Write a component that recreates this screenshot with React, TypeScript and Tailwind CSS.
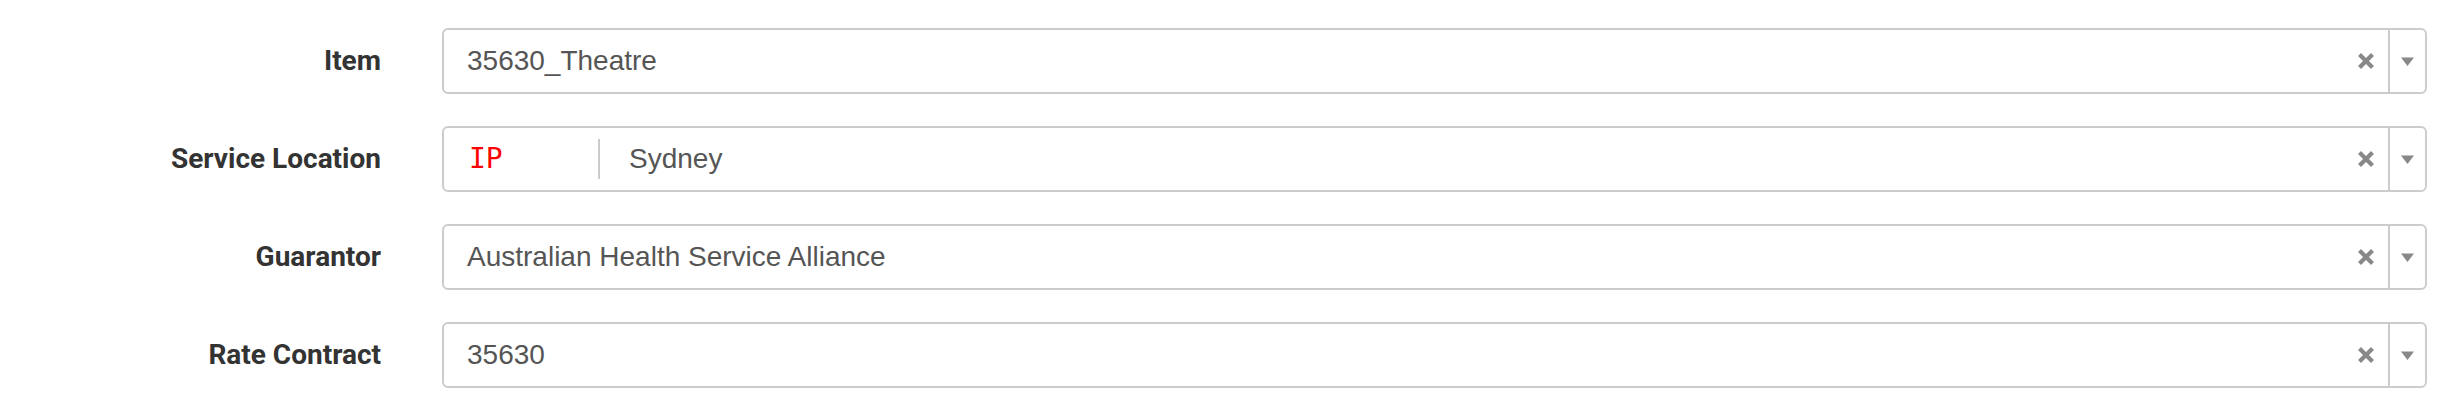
import React from "react";

type Row = {
  label: string;
  value: string;
  tag?: string;
};

const rows: Row[] = [
  { label: "Item", value: "35630_Theatre" },
  { label: "Service Location", value: "Sydney", tag: "IP" },
  { label: "Guarantor", value: "Australian Health Service Alliance" },
  { label: "Rate Contract", value: "35630" },
];

function ClearIcon() {
  return (
    <svg width="16" height="16" viewBox="0 0 16 16" className="block">
      <path d="M3 3 L13 13 M13 3 L3 13" stroke="#888888" strokeWidth="4.2" strokeLinecap="square" />
    </svg>
  );
}

function ArrowIcon() {
  return (
    <svg width="13" height="9" viewBox="0 0 13 9" className="block">
      <path d="M0 0.5 L13 0.5 L6.5 9 Z" fill="#888888" />
    </svg>
  );
}

function SelectBox({ value, tag }: { value: string; tag?: string }) {
  return (
    <div className="flex-1 flex items-stretch h-[66px] border-2 border-[#cccccc] rounded-[6px] bg-white">
      <div className="flex-1 flex items-center pl-[23px] min-w-0">
        {tag && (
          <>
            <span className="w-[131px] pl-[2px] text-[28px] text-[#ff0000] font-['DejaVu_Sans_Mono',monospace] leading-normal">
              {tag}
            </span>
            <span className="w-[2px] h-[40px] bg-[#cccccc] mr-[29px]" />
          </>
        )}
        <span className="text-[28px] text-[#555555] font-['Liberation_Sans',Arial,sans-serif] leading-normal whitespace-nowrap">
          {value}
        </span>
      </div>
      <div className="flex items-center pr-[14px]">
        <ClearIcon />
      </div>
      <div className="w-[2px] bg-[#cccccc]" />
      <div className="w-[35px] flex items-center justify-center">
        <ArrowIcon />
      </div>
    </div>
  );
}

export default function App() {
  return (
    <div className="w-[2448px] h-[406px] bg-white pt-[28px] pr-[21px] flex flex-col gap-[32px]">
      {rows.map((row) => (
        <div key={row.label} className="flex items-center gap-[61px]">
          <label className="w-[381px] text-right text-[28px] leading-normal font-bold text-[#333333] font-['Roboto',sans-serif]">
            {row.label}
          </label>
          <SelectBox value={row.value} tag={row.tag} />
        </div>
      ))}
    </div>
  );
}
